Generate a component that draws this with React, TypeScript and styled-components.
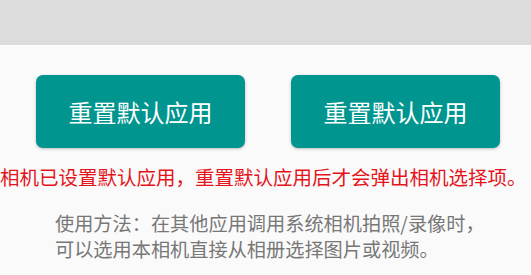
import React from "react";
import styled, { createGlobalStyle } from "styled-components";

const Global = createGlobalStyle`
  html, body { margin: 0; padding: 0; background: #fafafa; }
  body { font-family: "Noto Sans CJK SC", "Noto Sans", sans-serif; overflow: hidden; }
`;

const Page = styled.div`
  width: 531px;
  height: 275px;
  display: flex;
  flex-direction: column;
  background: #fafafa;
  overflow: hidden;
`;

const TopBar = styled.div`
  height: 45px;
  background: #dcdcdc;
  flex: none;
`;

const ButtonRow = styled.div`
  display: flex;
  gap: 46px;
  padding: 30px 0 0 36px;
`;

const ActionButton = styled.button`
  width: 209px;
  height: 73px;
  border: none;
  border-radius: 7px;
  background: #00968f;
  color: #ffffff;
  font-family: "Noto Sans CJK SC", sans-serif;
  font-size: 24px;
  box-shadow: 0 1px 3px rgba(0, 0, 0, 0.25);
  display: flex;
  align-items: center;
  justify-content: center;
  padding: 0;
`;

const Warning = styled.div`
  margin-top: 16px;
  width: 531px;
  white-space: nowrap;
  color: #e5141a;
  font-size: 19.5px;
  line-height: 26px;
`;

const Usage = styled.div`
  margin-top: 20px;
  padding-left: 55px;
  color: #777777;
  font-size: 19.2px;
  line-height: 26px;
  white-space: nowrap;
`;

export default function App() {
  return (
    <Page>
      <Global />
      <TopBar />
      <ButtonRow>
        <ActionButton>重置默认应用</ActionButton>
        <ActionButton>重置默认应用</ActionButton>
      </ButtonRow>
      <Warning>相机已设置默认应用，重置默认应用后才会弹出相机选择项。</Warning>
      <Usage>
        使用方法：在其他应用调用系统相机拍照/录像时，
        <br />
        可以选用本相机直接从相册选择图片或视频。
      </Usage>
    </Page>
  );
}
